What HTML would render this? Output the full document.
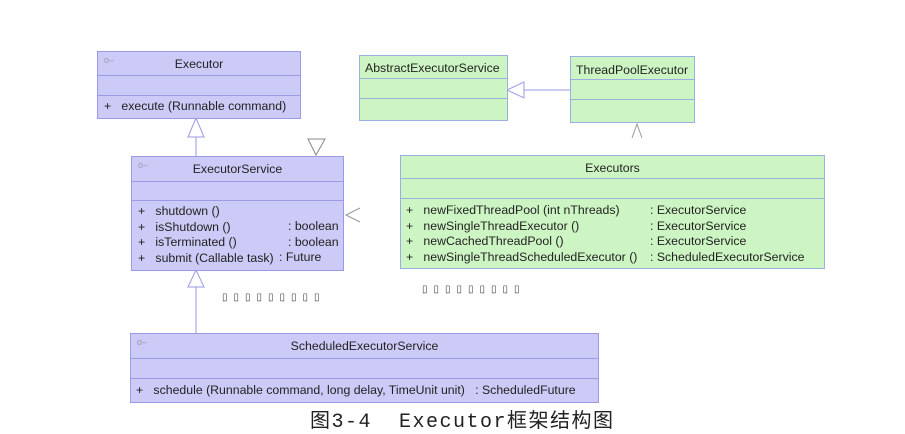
<!DOCTYPE html>
<html><head><meta charset="utf-8"><style>
body{margin:0;width:905px;height:433px;background:#fff;position:relative;overflow:hidden;font-family:"Liberation Sans",sans-serif;font-size:12.3px;color:#222}
.b{position:absolute;box-sizing:border-box;border:1px solid #9a9ae6}
.p{background:#cccaf6}.g{background:#cdf5c3;border-color:#9ab0e0}
.d{position:absolute;left:0;right:0;border-top:1px solid #9a9ae6}
.t{position:absolute;left:0;right:0;text-align:center}
.r{position:absolute;white-space:pre}
.ic{position:absolute;left:6px;top:3px;color:#99a;font-size:9px}
.sq{position:absolute;font-size:10px;color:#444;letter-spacing:6px}
</style></head><body>
<svg width="905" height="433" style="position:absolute;left:0;top:0">
<g fill="#fff" stroke="#9a9ae6" stroke-width="1">
<line x1="196" y1="137" x2="196" y2="156"/><polygon points="196,118 188,137 204,137"/>
<line x1="196" y1="287" x2="196" y2="333"/><polygon points="196,270 188,287 204,287"/>
<line x1="524" y1="90" x2="570" y2="90"/><polygon points="507,90 524,82 524,98"/>
<polygon points="308,139 325,139 316,155" stroke="#888"/>
<polyline points="360,208 346,215 360,222" fill="none" stroke="#999"/>
<polyline points="632,138 637,124 642,138" fill="none" stroke="#999"/>
</g></svg>
<div class="b p" style="left:97px;top:51px;width:204px;height:68px"><span class="ic">o–</span><div class="t" style="top:5px">Executor</div><div class="d" style="top:23px"></div><div class="d" style="top:43px"></div><div class="r" style="left:6px;top:47px">+   execute (Runnable command)</div></div>
<div class="b p" style="left:131px;top:156px;width:213px;height:115px"><span class="ic">o–</span><div class="t" style="top:5px">ExecutorService</div><div class="d" style="top:24px"></div><div class="d" style="top:43px"></div>
<div class="r" style="left:6px;top:47px;line-height:15.5px">+   shutdown ()
+   isShutdown ()
+   isTerminated ()
+   submit (Callable task)</div>
<div class="r" style="left:156px;top:62px;line-height:15.5px">: boolean
: boolean</div><div class="r" style="left:147px;top:93px">: Future</div></div>
<div class="b g" style="left:359px;top:55px;width:149px;height:66px"><div class="r" style="left:5px;top:5px">AbstractExecutorService</div><div class="d" style="top:22px;border-color:#9ab0e0"></div><div class="d" style="top:42px;border-color:#9ab0e0"></div></div>
<div class="b g" style="left:570px;top:56px;width:125px;height:67px"><div class="r" style="left:5px;top:6px">ThreadPoolExecutor</div><div class="d" style="top:22px;border-color:#9ab0e0"></div><div class="d" style="top:42px;border-color:#9ab0e0"></div></div>
<div class="b g" style="left:400px;top:155px;width:425px;height:114px"><div class="t" style="top:5px">Executors</div><div class="d" style="top:22px;border-color:#9ab0e0"></div><div class="d" style="top:42px;border-color:#9ab0e0"></div>
<div class="r" style="left:5px;top:47px;line-height:15.5px">+   newFixedThreadPool (int nThreads)
+   newSingleThreadExecutor ()
+   newCachedThreadPool ()
+   newSingleThreadScheduledExecutor ()</div>
<div class="r" style="left:249px;top:47px;line-height:15.5px">: ExecutorService
: ExecutorService
: ExecutorService
: ScheduledExecutorService</div></div>
<div class="sq" style="left:222px;top:292px">▯▯▯▯▯▯▯▯▯</div>
<div class="sq" style="left:422px;top:284px">▯▯▯▯▯▯▯▯▯</div>
<div class="b p" style="left:130px;top:333px;width:469px;height:70px"><span class="ic">o–</span><div class="t" style="top:5px">ScheduledExecutorService</div><div class="d" style="top:24px"></div><div class="d" style="top:44px"></div><div class="r" style="left:5px;top:49px">+   schedule (Runnable command, long delay, TimeUnit unit)   : ScheduledFuture</div></div>
<div class="r" style="left:310px;top:404px;font-family:'Liberation Mono','Noto Sans CJK SC',monospace;font-size:20px;letter-spacing:1.5px;color:#222">图3-4  Executor框架结构图</div>
</body></html>
